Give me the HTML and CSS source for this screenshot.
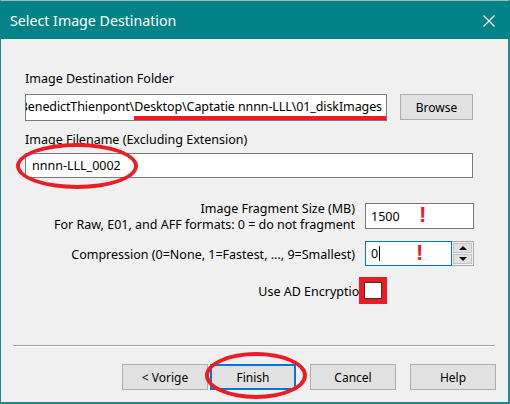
FILE: index.html
```html
<!DOCTYPE html>
<html>
<head>
<meta charset="utf-8">
<link rel="stylesheet" href="styles.css">
</head>
<body>
<div class="window">
  <div class="titlebar">
    <span class="title">Select Image Destination</span>
    <svg class="close" width="12" height="12" viewBox="0 0 12 12"><path d="M0.5 0.5 L11.5 11.5 M11.5 0.5 L0.5 11.5" stroke="#fff" stroke-width="1.1" fill="none"/></svg>
  </div>
  <div class="content">
    <div class="label first">Image Destination Folder</div>
    <div class="folder-row">
      <div class="textbox folder"><span class="scroll">BenedictThienpont\<span class="mark">Desktop\Captatie nnnn-LLL\01_diskImages</span></span></div>
      <div class="btn browse">Browse</div>
    </div>
    <div class="label second">Image Filename (Excluding Extension)</div>
    <div class="textbox filename"><span>nnnn-LLL_0002</span><div class="ellipse e1"></div></div>

    <div class="grid-row frag">
      <div class="rlabel"><div>Image Fragment Size (MB)</div><div>For Raw, E01, and AFF formats: 0 = do not fragment</div></div>
      <div class="textbox small"><span>1500</span><span class="bang b1">!</span></div>
    </div>
    <div class="grid-row comp">
      <div class="rlabel one">Compression (0=None, 1=Fastest, ..., 9=Smallest)</div>
      <div class="spin">
        <div class="textbox focus"><span>0</span><span class="caret"></span><span class="bang b2">!</span></div>
        <div class="spinbtns">
          <div class="sb"><span class="up"></span></div>
          <div class="sb"><span class="down"></span></div>
        </div>
      </div>
    </div>
    <div class="check-row">
      <span class="clabel">Use AD Encryption</span>
      <span class="checkbox"></span>
    </div>
    <div class="separator"></div>
    <div class="buttons">
      <div class="btn">&lt; Vorige</div>
      <div class="btn default">Finish<div class="ellipse e2"></div></div>
      <div class="btn gap">Cancel</div>
      <div class="btn gap">Help</div>
    </div>
  </div>
</div>
</body>
</html>
```
FILE: styles.css
```css
html, body {
  margin: 0;
  padding: 0;
  background: #f0f0f0;
}
body {
  width: 510px;
  height: 404px;
  overflow: hidden;
  font-family: "Noto Sans", "Open Sans", sans-serif;
  font-size: 12.5px;
  color: #000;
}
.window {
  box-sizing: border-box;
  width: 510px;
  height: 404px;
  border: 1px solid #1b8a8e;
  border-top-color: #a7b8b9;
  border-right-width: 2px;
  border-bottom-width: 2px;
  background: #f0f0f0;
}
.titlebar {
  height: 38px;
  background: #038387;
  margin: 0 -2px 0 -1px;
  display: flex;
  align-items: center;
  justify-content: space-between;
  padding: 0 15px 0 10px;
  box-sizing: border-box;
}
.title {
  color: #fff;
  font-size: 14.2px;
  line-height: 20px;
  margin-top: 1px;
}
.close {
  display: block;
  margin-top: 2px;
}
.content {
  padding-left: 24px;
}
.label {
  line-height: 16px;
  height: 16px;
}
.label.first { margin-top: 32px; }
.label.second { margin-top: 11px; }
.textbox {
  box-sizing: border-box;
  background: #fff;
  border: 1px solid #7a7a7a;
  display: flex;
  align-items: center;
  padding-left: 5px;
  position: relative;
  white-space: nowrap;
}
.folder-row {
  margin-top: 7px;
  display: flex;
  gap: 13px;
  align-items: flex-start;
}
.folder {
  width: 362px;
  height: 27px;
  overflow: hidden;
  justify-content: flex-end;
  padding: 0 4px 2px 0;
}
.scroll { flex: none; letter-spacing: -0.1px; }
.mark { position: relative; }
.mark::after {
  content: "";
  position: absolute;
  left: 0;
  right: -6px;
  bottom: -5px;
  height: 4px;
  background: #ed1c24;
}
.btn {
  box-sizing: border-box;
  width: 86px;
  height: 26px;
  background: #e1e1e1;
  border: 1px solid #adadad;
  display: flex;
  align-items: center;
  justify-content: center;
  position: relative;
  font-size: 12px;
}
.browse {
  width: 73px;
}
.filename {
  margin-top: 5px;
  width: 448px;
  height: 25px;
  padding-left: 6px;
}
.ellipse {
  position: absolute;
  border: 4px solid #ed1c24;
  border-radius: 50%;
  box-sizing: border-box;
  pointer-events: none;
}
.e1 {
  left: -10px;
  top: -11px;
  width: 122px;
  height: 46px;
}
.e2 {
  left: -7px;
  top: -14px;
  width: 102px;
  height: 47px;
}
.grid-row {
  display: grid;
  grid-template-columns: 330px 109px;
  column-gap: 10px;
  align-items: start;
}
.frag { margin-top: 23px; }
.rlabel {
  text-align: right;
  line-height: 16px;
  white-space: nowrap;
}
.rlabel div { height: 16px; }
.frag .textbox {
  height: 26px;
  margin-top: 2px;
}
.comp {
  margin-top: 8px;
  align-items: center;
}
.rlabel.one { padding-top: 3px; }
.spin {
  display: flex;
  height: 25px;
}
.focus {
  width: 87px;
  height: 25px;
  border-color: #0078d7;
  padding-left: 5px;
}
.caret {
  width: 1px;
  height: 15px;
  background: #000;
  margin-left: 1px;
}
.bang {
  position: absolute;
  color: #ed1c24;
  font-family: "Liberation Sans", sans-serif;
  font-weight: bold;
  font-size: 22px;
  line-height: 22px;
}
.b1 { left: 53px; top: 0px; }
.b2 { left: 50px; top: 0px; }
.spinbtns {
  width: 22px;
  height: 25px;
  box-sizing: border-box;
  border: 1px solid #acacac;
  border-left: none;
  display: flex;
  flex-direction: column;
  padding: 1px;
  gap: 1px;
  background: #f0f0f0;
}
.sb {
  flex: 1;
  background: #e1e1e1;
  border: 1px solid #c4c4c4;
  display: flex;
  align-items: center;
  justify-content: center;
}
.up {
  width: 0; height: 0;
  border-left: 4px solid transparent;
  border-right: 4px solid transparent;
  border-bottom: 4px solid #000;
}
.down {
  width: 0; height: 0;
  border-left: 4px solid transparent;
  border-right: 4px solid transparent;
  border-top: 4px solid #000;
}
.check-row {
  margin-top: 16px;
  width: 357px;
  height: 17px;
  display: flex;
  justify-content: flex-end;
  align-items: center;
}
.clabel {
  line-height: 17px;
  margin-top: 2px;
}
.checkbox {
  flex: none;
  width: 18px;
  height: 17px;
  box-sizing: border-box;
  background: #fff;
  border: 1px solid #333;
  margin-left: -3px;
  outline: 5px solid #ed1c24;
}
.separator {
  margin-top: 46px;
  margin-left: -12px;
  width: 482px;
  height: 1px;
  background: #a0a0a0;
  border-bottom: 1px solid #fff;
}
.buttons {
  margin-top: 17px;
  margin-left: 97px;
  display: flex;
  gap: 2px;
}
.buttons .gap { margin-left: 12px; }
.default {
  border: 2px solid #0078d7;
}
```
